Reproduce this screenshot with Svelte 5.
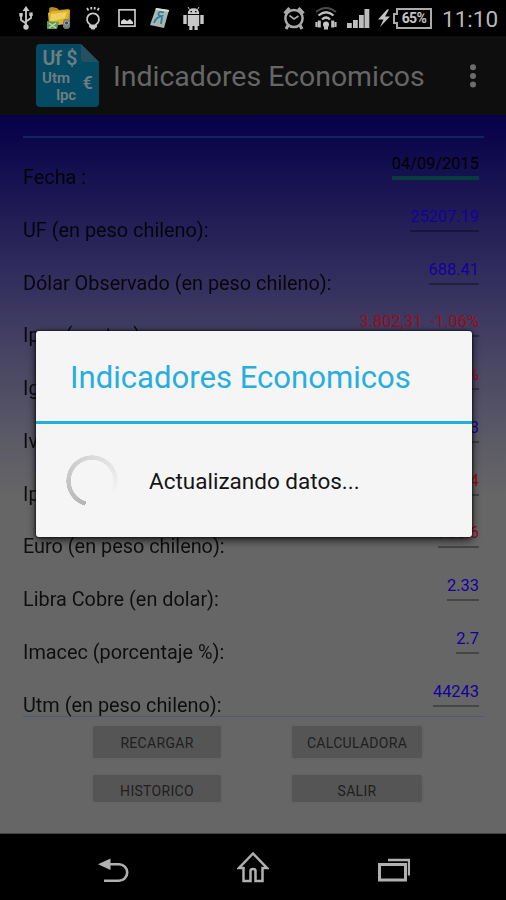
<script lang="ts">
	interface Indicator {
		label: string
		value: string
		tone?: 'up' | 'down' | 'date'
	}

	const indicators: Indicator[] = [
		{ label: 'Fecha :', value: '04/09/2015', tone: 'date' },
		{ label: 'UF (en peso chileno):', value: '25207.19' },
		{ label: 'Dólar Observado (en peso chileno):', value: '688.41' },
		{ label: 'Ipsa (puntos):', value: '3.802,31  -1.06%', tone: 'down' },
		{ label: 'Igpa (puntos):', value: '-0.86%', tone: 'down' },
		{ label: 'Ivp:', value: '26173.23' },
		{ label: 'Ipc:', value: '0.4', tone: 'down' },
		{ label: 'Euro (en peso chileno):', value: '766.6', tone: 'down' },
		{ label: 'Libra Cobre (en dolar):', value: '2.33' },
		{ label: 'Imacec (porcentaje %):', value: '2.7' },
		{ label: 'Utm (en peso chileno):', value: '44243' }
	]

	const actions = ['Recargar', 'Calculadora', 'Historico', 'Salir']
</script>

<div class="screen">
	<header class="status">
		<div class="notifications">
			<svg width="14" height="26" viewBox="0 0 14 26" fill="none" stroke="#c8c8c8" stroke-width="1.8">
				<path d="M7 4v17M7 18.500L2 15v-5M7 16.500l5-3.500V9" />
				<path d="M3.500 6L7 1l3.500 5zM.3 8h3.400v3.400H.3zM10.300 7.500h3.400v3.400h-3.400z" fill="#c8c8c8" stroke="none" />
				<circle cx="7" cy="22" r="2.700" fill="#c8c8c8" stroke="none" />
			</svg>
			<svg width="25" height="26" viewBox="0 0 25 26">
				<path d="M2 5q0-3 3-3l5 1 2 2 9-1q2 0 2 2v12L4 20z" fill="#b88c1c" />
				<path d="M1 8l4-2 18-1-3 14-18 2z" fill="#dcb42c" />
				<path d="M4 9l16-2-2 6-15 4z" fill="#efd05c" />
				<path d="M0 16l12 1-2 7H0z" fill="#5d9b55" />
				<path d="M2 18l7 5M9 18l-7 5" stroke="#bdd6ae" stroke-width="1.500" />
				<rect x="16" y="14" width="7" height="10" rx="3" fill="#777f7c" />
				<circle cx="19.500" cy="18" r="2" fill="#374744" stroke="#a8b0ac" />
			</svg>
			<svg width="16" height="26" viewBox="0 0 16 26" fill="none" stroke="#c8c8c8" stroke-width="1.800">
				<path d="M5 19.500a6 6 0 1 1 6 0v2H5zM3.500 5.500L2 3M6.300 4.500V2M9.700 4.500V2M12.500 5.500L14 3" />
				<path d="M4.800 19.500h6.400V22L9.500 24.500h-3L4.800 22z" fill="#c8c8c8" stroke="none" />
			</svg>
			<svg width="18" height="26" viewBox="0 0 18 26">
				<rect x="1" y="4.800" width="16" height="16.400" fill="none" stroke="#c8c8c8" stroke-width="1.700" />
				<path d="M3 19v-3l3-2 3 2 3-2 3 3v2z" fill="#d5d5d5" />
			</svg>
			<svg width="20" height="26" viewBox="0 0 20 26">
				<path d="M6 3l13 2-5 18-14-3z" fill="#a9b6b5" />
				<path d="M6 3l13 2-.5 2L5.500 5z" fill="#d7dddd" />
				<path d="M14 7.500q-6-2-5.500 2 .5 2.500 5 1M12 11q-6 1-8 7M12 12l-1 7" fill="none" stroke="#2c8298" stroke-width="1.800" />
			</svg>
			<svg width="21" height="26" viewBox="0 0 21 26" fill="#c8c8c8">
				<path d="M4.800 9q0-5.800 5.700-5.800T16.200 9zM4.800 10h11.400v11H4.800zM.3 10h3.400v9H.3zM17.300 10h3.400v9h-3.400zM6.300 20h3.200v5H6.300zM11.500 20h3.200v5h-3.200z" />
				<path d="M6.500 4.500L5 2M14.500 4.500L16 2" stroke="#c8c8c8" />
				<path d="M7.500 6h1.500v1.200H7.500zM12 6h1.500v1.200H12z" fill="#000" />
			</svg>
		</div>
		<div class="system">
			<svg class="alarm" width="22" height="26" viewBox="0 0 22 26" fill="none" stroke="#a9a9a9">
				<circle cx="11" cy="13.500" r="8.600" stroke-width="2.500" />
				<path d="M1.500 8.500L6.500 3M20.500 8.500L15.500 3M5 20.500l-2 3.500M17 20.500l2 3.500" stroke-width="3.200" />
				<path d="M6.500 10.500l4.500 3.500 4.500-3" stroke-width="1.600" />
			</svg>
			<svg class="wifi" width="22" height="26" viewBox="0 0 22 26" fill="none">
				<path d="M1 7q10-8 20 0" stroke="#4d4d4d" stroke-width="2" />
				<path d="M3.500 10.500q7.500-6.500 15 0M7 14.500q4-4 8 0" stroke="#c0c0c0" stroke-width="2.200" />
				<circle cx="11" cy="19.500" r="3" fill="#c8c8c8" />
				<path d="M11 20v4.500" stroke="#c0c0c0" stroke-width="4" />
				<path d="M4.300 15.500v7M17.700 15.500v7" stroke="#c0c0c0" stroke-width="3" />
				<path d="M1.500 17v5M20.500 17v5" stroke="#c0c0c0" stroke-width="2.200" />
			</svg>
			<svg class="signal" width="23" height="26" viewBox="0 0 23 26" fill="#bdbdbd">
				<path d="M0 18h4.800v5H0zM6 15h4.800v8H6zM12 10h4.800v13H12zM17.500 4h4.800v19h-4.800z" />
			</svg>
			<svg class="bolt" width="12" height="26" viewBox="0 0 12 26">
				<path d="M9 4.500L0 14.500h5.500L2 22l10-10.500H7l4-7z" fill="#c4c4c4" />
			</svg>
			<span class="battery">65%</span>
			<span class="clock">11:10</span>
		</div>
	</header>

	<div class="action-bar">
		<svg class="logo" width="64" height="64" viewBox="0 0 64 64">
			<path d="M4 0h41l18 18v41q0 4-4 4H4q-4 0-4-4V4q0-4 4-4z" fill="#044a62" />
			<path d="M45 0l18 18H48q-3 0-3-3z" fill="#24505f" />
			<g fill="#6f7d82" font-weight="600">
				<text x="6.500" y="21" font-size="19.500" textLength="35">Uf $</text>
				<text x="6" y="39" font-size="15" textLength="28">Utm</text>
				<text x="46.500" y="45" font-size="18" textLength="10">€</text>
				<text x="20" y="56" font-size="15" textLength="20">Ipc</text>
			</g>
		</svg>
		<h1>Indicadores Economicos</h1>
		<svg class="overflow" width="8" height="24" viewBox="0 0 8 24" fill="#6d6d6d">
			<circle cx="4" cy="3.300" r="3" />
			<circle cx="4" cy="12" r="3" />
			<circle cx="4" cy="20.500" r="3" />
		</svg>
	</div>

	<main>
		<div class="list">
			{#each indicators as item}
				<div class="row">
					<span class="label">{item.label}</span>
					<span class="value {item.tone ?? 'up'}">{item.value}</span>
				</div>
			{/each}
		</div>

		<div class="actions">
			{#each actions as action}
				<button>{action}</button>
			{/each}
		</div>
	</main>

	<nav>
		<svg width="32" height="26" viewBox="0 0 32 26" fill="none" stroke="#b0b0b0" stroke-width="2.600">
			<path d="M8 7.300h13a8.200 8.200 0 0 1 0 16.400H6" />
			<path d="M0 7.300L12.500 1.500v11.500z" fill="#b0b0b0" stroke="none" />
		</svg>
		<svg width="32" height="32" viewBox="0 0 32 32" fill="none" stroke="#b0b0b0" stroke-width="2.500">
			<path d="M16 2.500L2 17h4.500v13h7V20q0-2 2.500-2t2.500 2v10h7V17H30z" />
		</svg>
		<svg width="32" height="24" viewBox="0 0 32 24" fill="none" stroke="#b0b0b0">
			<rect x="1.500" y="6.500" width="26" height="15.500" stroke-width="3" />
			<path d="M10 2h21v15.500" stroke-width="2.300" />
		</svg>
	</nav>

	<div class="dialog" role="dialog" aria-label="Indicadores Economicos">
		<h2>Indicadores Economicos</h2>
		<div class="progress">
			<div class="spinner"></div>
			<p>Actualizando datos...</p>
		</div>
	</div>
</div>

<style>
	:global(body) {
		margin: 0;
		background: #000;
	}

	.screen {
		position: relative;
		display: flex;
		flex-direction: column;
		width: 506px;
		height: 900px;
		overflow: hidden;
		font-family: Roboto, sans-serif;
		background: #000;
	}

	.status {
		display: flex;
		justify-content: space-between;
		height: 36px;
		padding: 5px 8px 0 19px;
		box-sizing: border-box;
	}

	.notifications {
		display: grid;
		grid-template-columns: repeat(6, 33.600px);
		justify-items: center;
		margin-left: -10px;
	}

	.system {
		display: flex;
	}

	.wifi {
		margin-left: 10px;
	}

	.signal {
		margin-left: 10px;
	}

	.bolt {
		margin-left: 8px;
	}

	.battery {
		position: relative;
		width: 36px;
		height: 21px;
		margin: 3px 10px 0 6px;
		box-sizing: border-box;
		border: 2px solid #aaa;
		color: #c4c4c4;
		font-size: 14px;
		font-weight: 700;
		line-height: 17px;
		text-align: center;
		letter-spacing: -0.6px;
	}

	.battery::before {
		content: '';
		position: absolute;
		left: -5px;
		top: 3px;
		width: 3px;
		height: 7px;
		border: 2px solid #aaa;
		border-right: 0;
		background: #000;
	}

	.clock {
		width: 56px;
		color: #b8b8b8;
		font-size: 22.500px;
		line-height: 28px;
		white-space: nowrap;
	}

	.action-bar {
		display: flex;
		align-items: center;
		height: 79px;
		padding: 0 29px 0 36px;
		background: #0e0e0e;
	}

	h1 {
		flex: 1;
		margin: 2px 0 0 13px;
		color: #666;
		font-size: 28.450px;
		font-weight: 400;
		white-space: nowrap;
	}

	main {
		height: 719px;
		padding: 21px 22px 0 23px;
		box-sizing: border-box;
		border-bottom: 1px solid #444;
		background: linear-gradient(#050049 0, #1e1953 90px, #383460 185px, #434062 225px, #5b5a66 325px, #666 380px);
	}

	.list {
		height: 581px;
		box-sizing: border-box;
		border-top: 2px solid #10245d;
		border-bottom: 1px solid #4d5b78;
	}

	.row {
		display: flex;
		justify-content: space-between;
		height: 52.750px;
		padding-right: 5px;
	}

	.label {
		padding-top: 27px;
		color: #000;
		opacity: 0.86;
		font-size: 19.850px;
		line-height: 26px;
		white-space: nowrap;
	}

	.value {
		height: 27px;
		margin-top: 12px;
		font-size: 16.400px;
		line-height: 27px;
		white-space: pre;
		border-bottom: 2px solid rgba(0, 0, 0, 0.32);
	}

	.value.up {
		color: #15009c;
	}

	.value.down {
		color: #960d1b;
	}

	.value.date {
		height: 26px;
		color: #000;
		border-bottom: 4px solid #063d3c;
	}

	.actions {
		display: grid;
		grid-template-columns: 128px 130px;
		grid-template-rows: 32px 27px;
		gap: 17px 71px;
		margin: 9px 0 0 70px;
	}

	button {
		padding: 2px 0 0;
		border: 0;
		border-radius: 2px;
		background: #555;
		color: #202020;
		font-family: inherit;
		font-size: 14px;
		letter-spacing: 0.3px;
		text-transform: uppercase;
		box-shadow: 0 0 2px #5b5b5b;
	}

	button:nth-child(n + 3) {
		padding-top: 5px;
	}

	nav {
		display: flex;
		justify-content: space-between;
		align-items: center;
		height: 66px;
		padding: 5px 96px 0 98px;
		box-sizing: border-box;
	}

	nav svg:nth-child(2) {
		margin: -6px 2px 0 0;
	}

	.dialog {
		position: absolute;
		left: 36px;
		top: 331px;
		width: 436px;
		height: 206px;
		border-radius: 3px;
		background: #f5f5f5;
		box-shadow: 0 0 3px #000, 0 3px 8px rgba(0, 0, 0, 0.75);
	}

	h2 {
		height: 93px;
		margin: 0;
		padding-left: 34px;
		box-sizing: border-box;
		border-bottom: 3px solid #22b0dd;
		color: #28aede;
		font-size: 31.100px;
		font-weight: 400;
		line-height: 94px;
		white-space: nowrap;
	}

	.progress {
		display: flex;
		align-items: center;
		height: 113px;
		padding-left: 30px;
	}

	.spinner {
		width: 52px;
		height: 52px;
		border-radius: 50%;
		background: conic-gradient(from 196deg, #b5b5b5, #d5d5d5 40%, #f1f1f1 75%, transparent 78%);
		mask: radial-gradient(closest-side, transparent 21px, #000 21.500px, #000 25.500px, transparent 26px);
	}

	p {
		margin: 0 0 0 31px;
		color: #151515;
		font-size: 22.500px;
		white-space: nowrap;
	}
</style>
